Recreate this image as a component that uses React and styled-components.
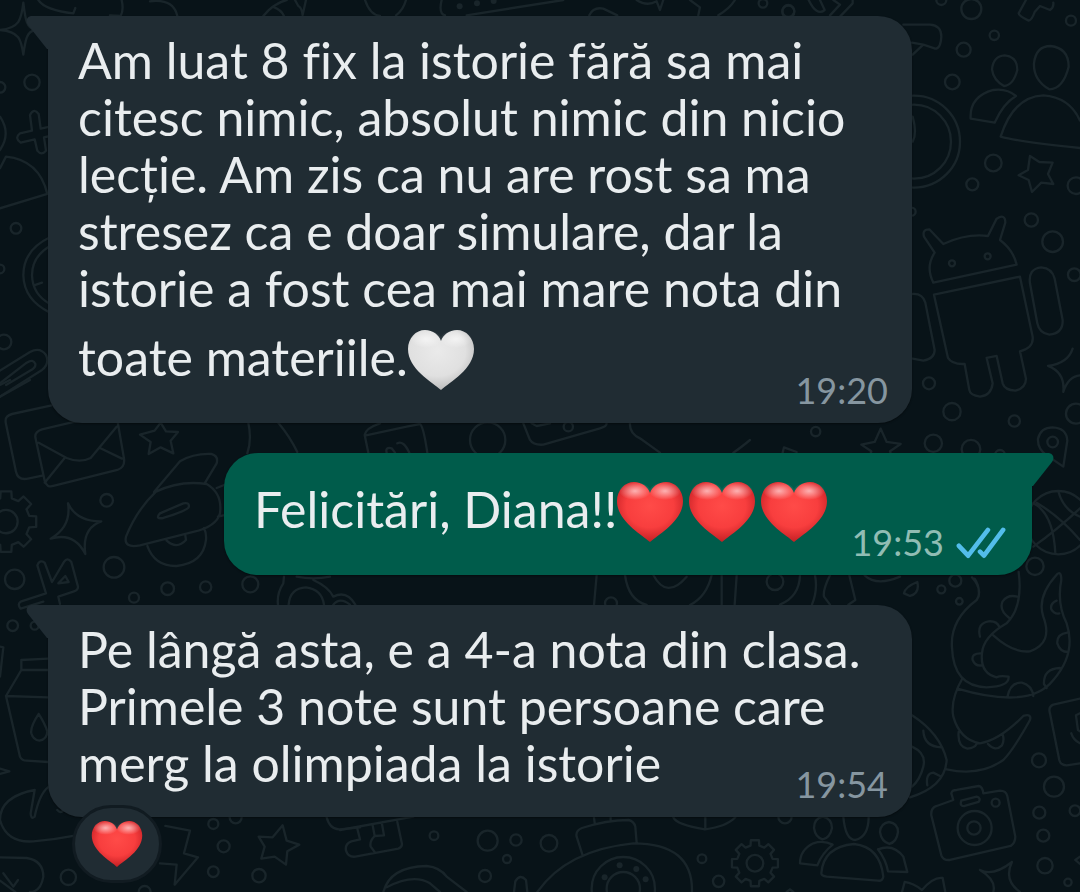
import React from 'react'
import styled, { createGlobalStyle, css } from 'styled-components'

const GlobalStyle = createGlobalStyle`
  body {
    margin: 0;
    background: #081318;
    font-family: Lato, 'Noto Sans', sans-serif;
    font-variant-ligatures: none;
  }
`

const Page = styled.main`
  position: relative;
  box-sizing: border-box;
  min-height: 100vh;
  padding: 16px 48px 0;
  overflow: hidden;
`

const WallpaperSvg = styled.svg`
  position: absolute;
  inset: 0;
  width: 100%;
  height: 100%;
  fill: none;
  stroke: #19252a;
  stroke-width: 7;
  stroke-linecap: round;
  stroke-linejoin: round;
`

const Dot = styled.circle`
  fill: #19252a;
  stroke: none;
`

const MessageList = styled.div`
  position: relative;
  display: flex;
  flex-direction: column;
  gap: 30px;
`

const Bubble = styled.article`
  position: relative;
  display: grid;
  padding: 16px 24px 25px 30px;
  color: #e9edef;
  box-shadow: 0 1px 2px rgba(0, 0, 0, 0.4);

  ${({ $sent }) => $sent ? css`
    margin-left: 176px;
    padding-right: 26px;
    border-radius: 34px 0 34px 34px;
    background: #005c4b;
    --tail: #005c4b;
  ` : css`
    margin-right: 120px;
    border-radius: 0 34px 34px 34px;
    background: #202c33;
    --tail: #202c33;
  `}
`

const TailSvg = styled.svg`
  position: absolute;
  top: 0;
  width: 22px;
  height: 33px;
  fill: var(--tail);

  ${({ $sent }) => $sent ? css`
    left: 100%;
    transform: scaleX(-1);
  ` : css`
    right: 100%;
  `}
`

const Text = styled.p`
  grid-area: 1 / 1;
  margin: 0;
  font-size: 50px;
  line-height: 57px;
  white-space: pre-line;
`

const Meta = styled.footer`
  grid-area: 1 / 1;
  place-self: end;
  display: flex;
  align-items: center;
  gap: 12px;
  margin-bottom: -12px;
  font-size: 36px;
  line-height: 40px;
  color: ${({ $sent }) => ($sent ? '#91bdb4' : '#8696a0')};
`

const ChecksSvg = styled.svg`
  width: 50px;
  height: 33px;
  fill: none;
  stroke: #53bdeb;
  stroke-width: 14;
  stroke-linecap: round;
  stroke-linejoin: round;
`

const InlineHeart = styled.svg`
  width: 72px;
  height: 81px;
  vertical-align: -22px;
`

const Reaction = styled.button`
  position: absolute;
  top: 100%;
  left: 24px;
  display: flex;
  align-items: center;
  justify-content: center;
  width: 90px;
  height: 78px;
  margin-top: -12px;
  padding: 0;
  border: 3px solid #111b21;
  border-radius: 40px;
  background: #202c33;
`

const ReactionHeart = styled.svg`
  width: 52px;
  height: 48px;
`

const HEART = 'M34 61C25 53 1 40 1 20C1 9 9 1 18 1C26 1 32 6 34 12C36 6 42 1 50 1C59 1 67 9 67 20C67 40 43 53 34 61Z'

// Doodles are grouped by the part of the wall they sit in, three units to a pixel.
const DOODLES = [
  {
    x: 0, y: 0,
    circles: [[96, 247, 23], [0, 262, 16], [48, 685, 16], [0, 807, 13], [12, 1026, 22]],
    path: `M70 8C76 60 80 84 106 90C80 94 76 120 70 164C64 120 58 94 0 90C58 84 64 60 70 8
      M150 380L122 386L116 342Q102 322 90 345L96 392L60 400Q42 414 62 428L104 418L112 452Q124 468 138 452L132 412L150 408
      M0 350Q34 400 0 450 M0 505L18 470Q118 480 142 582L0 625
      M150 712Q70 750 70 826Q72 900 150 938 M150 738Q96 770 96 826Q98 884 150 912 M102 856L126 848
      M0 1112L90 1056Q120 1040 138 1065Q150 1090 126 1110L0 1190 M0 1150L80 1088Q100 1076 106 1092Q108 1104 90 1112L18 1155
      M115 0Q135 30 220 40L226 24 M365 0Q372 30 362 48L330 46 M450 4Q520 -5 532 48
      M790 48Q820 10 860 0 M818 20Q845 30 852 48 M885 0L895 18Q905 22 908 45 M918 0L908 45`,
  },
  {
    x: 330, y: 0,
    circles: [[1299, 10, 13], [1375, 33, 18]],
    dots: [[389, 19], [441, 10], [491, 3]],
    path: `M105 0Q120 45 150 48 M228 0Q220 30 198 46 M335 0Q325 40 345 46 M410 46L700 0
      M778 46Q790 20 820 26L862 46 M920 0Q950 20 980 4L990 30L1000 0
      M1080 0L1110 22L1105 46 M1215 0Q1200 25 1165 46`,
  },
  {
    x: 780, y: 0,
    circles: [
      [25, 35, 18], [574, 27, 30], [484, 0, 15], [873, 62, 15], [643, 106, 14], [551, 149, 21], [517, 246, 22],
      [640, 489, 25], [577, 553, 18], [888, 557, 25], [395, 635, 12], [754, 660, 20], [818, 725, 31], [883, 824, 19],
      [447, 1150, 18], [516, 1235, 26], [703, 1263, 17], [888, 1241, 30], [107, 1295, 14], [460, 1330, 26],
      [573, 1348, 28], [402, 425, 138], [402, 425, 111], [516, 790, 9], [623, 769, 9],
    ],
    path: `M738 0L716 40Q716 48 746 62Q756 60 764 36L780 18L810 30Q822 22 820 8
      M370 74L450 74Q484 76 484 110Q482 146 466 146L430 134L396 128 M430 134L398 164 M398 350Q412 400 398 425
      M674 166Q712 170 712 210Q700 256 672 258Q640 240 636 208Q640 168 674 166Z
      M812 138Q866 144 866 200Q850 266 808 268Q760 240 762 190Q768 138 812 138Z
      M572 356Q568 290 640 270Q680 264 708 288Q670 310 644 368Z M900 362Q870 292 790 286Q700 290 662 410Q720 426 900 444
      M750 468L778 486L818 488L804 522L820 552L784 548L756 576L746 540L716 526L744 510Z
      M460 848Q436 800 464 758L432 710Q426 688 448 688L490 732Q560 700 624 708L650 656Q676 640 676 668L660 720Q700 750 710 794Z
      M462 884L720 830L758 1010Q762 1044 720 1054L738 1136Q738 1164 706 1172Q674 1170 668 1150L650 1068L620 1074L638 1150Q634 1186 600 1190Q570 1186 568 1170L554 1092Q516 1094 504 1074Z
      M398 882Q428 880 436 908L464 1050Q464 1076 430 1082L398 1076
      M750 850Q744 806 784 802Q816 804 824 836L848 960Q850 1000 808 1004Q778 1000 772 970Z
      M878 1046Q864 1090 804 1098Q856 1118 850 1176Q864 1130 900 1126
      M302 1286L320 1326L362 1332L330 1354L338 1380 M302 1286L284 1326L244 1334L274 1354L266 1380
      M86 0Q110 50 134 30L120 0 M180 50L218 10V0 M150 46L180 14L160 0`,
  },
  {
    x: 0, y: 380,
    circles: [
      [320, 361, 19], [44, 598, 29], [342, 562, 31], [503, 626, 19], [617, 621, 17], [402, 653, 15],
      [751, 613, 24], [38, 737, 16], [104, 737, 12],
    ],
    path: `M0 50L90 0 M0 15L30 0
      M155 76L36 102Q12 108 18 132L48 275Q54 302 84 296L130 286
      M106 172Q104 155 126 148L330 100Q348 96 352 120L372 235Q376 262 352 270L160 318Q140 324 134 302Z
      M116 188L200 234Q240 250 272 234L350 140 M134 308L194 234 M300 204L366 236
      M482 128L498 154L534 156L512 182L520 220L482 202L446 222L452 186L420 164L464 152Z
      M378 470Q410 390 468 335Q540 300 620 312Q668 340 660 400Q650 440 580 456L420 496Q370 506 378 470Z
      M462 336L540 244Q580 220 634 222Q656 228 650 250L614 310
      M480 400L550 370Q570 366 566 382Q560 392 490 414Q464 418 480 400
      M442 498Q464 560 530 558Q610 550 618 480Q620 460 612 444 M500 482Q530 510 558 480L556 466 M650 324L680 312 M654 410L680 404
      M204 370Q230 425 304 424Q245 445 256 522Q222 455 152 476Q215 440 204 370
      M180 672L175 650L222 634Q234 630 234 620L214 546Q202 530 192 546L156 606L134 548Q118 538 112 556L138 640L64 664Q50 672 62 686L130 665
      M175 610L196 588L206 606Z M745 128Q756 180 742 220 M835 128Q870 170 892 216
      M852 590L850 610Q830 640 834 674 M866 674Q870 624 918 622Q966 628 972 674 M890 590Q940 600 990 590
      M940 600Q985 620 1000 650Q1040 630 1066 674 M1000 674Q1020 650 1050 674`,
  },
  {
    x: 340, y: 300,
    circles: [[443, 420, 53], [685, 380, 14]],
    path: `M85 458L74 405Q76 385 120 370 M78 406L200 380L240 372Q250 378 262 458
      M140 458Q135 440 155 445L165 458 M172 430Q190 420 208 458
      M550 370L570 420Q580 436 610 434L780 385Q800 380 800 370 M575 370L590 378L630 370 M870 370Q868 400 900 415L960 458`,
  },
  {
    x: 590, y: 440,
    circles: [[63, 490, 18]],
    path: `M480 0Q450 25 430 38 M578 38L582 22L620 36
      M20 405L12 495 M105 405Q115 480 170 495 M365 405Q350 470 300 495 M190 405Q230 480 290 410`,
  },
  {
    x: 900, y: 370,
    circles: [[458, 216, 16], [475, 458, 95], [405, 589, 26], [300, 255, 15]],
    path: `M490 290L440 256Q412 236 414 206Q422 172 458 172Q500 174 502 212Z
      M400 400Q460 430 466 550 M475 364Q490 420 540 440 M400 530Q470 480 540 415 M410 398Q480 440 540 510`,
  },
  {
    x: 0, y: 590,
    circles: [[205, 862, 23], [640, 702, 15], [671, 769, 18], [640, 845, 16], [777, 857, 20], [434, 906, 18], [707, 682, 18]],
    path: `M144 206L64 210L64 240L144 240 M64 240L18 318L144 322 M18 318L60 500Q66 512 80 512L144 516
      M116 372Q90 412 94 430Q100 450 118 452Q142 448 142 424Q134 400 116 372 M0 170L10 172L0 260 M0 536L28 544L0 552
      M144 592Q118 612 104 680Q92 690 92 670L104 600Q0 620 0 690Q20 760 100 754Q160 750 220 738 M172 660q10 12 18 0
      M0 802L80 804Q130 812 130 860Q122 906 90 906 M10 850L40 890L54 870 M0 872L46 906
      M496 708L570 722L552 790L594 802L524 884L530 824L480 820
      M848 706L860 752L898 764L862 784L858 824L824 800L784 806L794 770L776 740L818 742Z
      M980 682Q990 720 1020 718L1080 712`,
  },
  {
    x: 340, y: 780,
    circles: [
      [282, 167, 13], [443, 182, 30], [528, 180, 17], [627, 190, 25], [501, 237, 12], [435, 288, 18],
      [1086, 236, 13], [1136, 304, 17], [850, 326, 95], [850, 326, 50],
    ],
    dots: [[839, 256], [889, 267], [794, 292], [917, 298]],
    path: `M0 150L220 110 M52 146L60 178L34 184Q14 192 18 212Q24 232 46 230L175 206Q186 202 186 192L172 126
      M98 136L104 168L132 166L126 132 M104 168Q88 184 92 200L104 216
      M130 336Q150 260 260 258Q300 262 320 290L380 336 M140 322Q220 280 270 310L300 336
      M522 336L526 304Q540 280 558 300L562 336 M592 336Q680 210 880 190Q1060 190 1056 336
      M728 226L710 170Q706 152 726 144Q800 120 866 120Q882 124 886 140L890 188 M764 128L762 112 M812 122V112
      M1000 112Q1010 135 1095 148Q1160 140 1186 112 M1096 112V148`,
  },
  {
    x: 720, y: 560,
    circles: [
      [165, 65, 25], [664, 88, 12], [706, 62, 18], [718, 124, 10], [957, 601, 21], [1002, 680, 30],
      [958, 758, 18], [1065, 752, 16], [970, 827, 18], [975, 917, 23], [1044, 967, 11], [195, 770, 20],
      [764, 804, 51], [762, 804, 20], [827, 728, 12],
    ],
    path: `M552 100Q556 80 592 66Q600 100 570 108Z
      M5 46V134 M50 46L44 134 M240 46Q238 110 180 134 M285 46Q294 90 276 134 M330 46Q308 90 312 110L330 134 M388 46L406 120L385 134 M434 46Q470 80 540 50
      M756 52Q790 90 770 120Q690 180 696 262Q700 380 800 382Q868 380 866 350Q840 346 830 352Q780 340 786 280Q790 230 860 190Q910 140 896 36
      M764 56Q780 80 776 110 M820 226Q880 280 930 274Q1000 250 970 170Q950 110 1010 44Q1024 30 1024 60Q1010 130 1040 190Q1070 280 1000 360Q930 450 712 386
      M728 354Q690 420 700 470Q720 540 780 550Q840 540 910 468Q936 460 930 480Q880 570 850 600Q780 650 680 628
      M576 466Q660 520 680 600Q676 680 570 712 M576 560Q620 580 610 620Q600 660 576 680
      M868 174Q836 150 848 124Q864 102 892 110 M780 230Q770 190 806 184Q830 182 838 200 M782 280Q754 280 758 300Q766 320 786 316
      M1010 122Q990 130 994 148Q1004 164 1018 160 M1042 218Q1010 222 1012 250Q1020 276 1044 276 M1020 324Q970 326 972 372L980 384
      M862 412Q870 366 906 368Q936 376 940 408 M716 516Q712 560 742 566Q764 564 770 552 M804 552Q826 576 846 556Q854 540 848 524
      M610 512Q612 560 664 562 M622 676Q616 640 640 638L660 648
      M1080 416L1000 434Q984 440 990 460L1018 600Q1022 616 1040 616L1080 610 M1080 460L1068 466L1074 510L1080 514 M1054 520Q1060 540 1080 550
      M700 720L694 700Q696 690 710 690L776 678Q788 680 790 700L840 692Q858 692 862 708L886 830Q886 848 872 858L690 900Q670 902 664 886L634 766Q632 744 650 738Z
      M724 722L770 710Q784 714 776 726L734 738Q718 740 724 722
      M308 770Q336 776 336 804Q330 834 308 838Q286 832 282 804Q282 776 308 770Z M370 770Q376 840 406 840Q446 830 446 770
      M507 786Q534 790 534 816Q530 846 508 852Q484 844 480 816Q482 790 507 786Z
      M304 940Q310 860 402 852Q480 860 490 950Q488 964 474 962L320 950Q304 948 304 940Z
      M338 854Q310 840 280 850Q240 870 240 910L292 916Q306 880 338 854Z M474 868Q520 850 550 890L562 936L504 934Q498 900 474 868
      M876 906Q850 960 900 996 M780 930Q820 950 876 906 M780 930Q830 960 820 996
      M546 996L554 966Q580 970 606 990Q640 950 668 954L676 996 M1080 890L1066 900L1080 912 M200 996l10 -8l10 8`,
  },
]

const gearPath = (cx, cy, r) => {
  const points = []
  for (let i = 0; i < 8; i++) {
    [[-14, 0.78], [-10, 1], [10, 1], [14, 0.78]].forEach(([offset, k]) => {
      const angle = ((i * 45 + offset) * Math.PI) / 180
      points.push(`${cx + Math.cos(angle) * r * k} ${cy + Math.sin(angle) * r * k}`)
    })
  }
  return `M${points.join('L')}Z`
}

const GEARS = [
  { cx: 18, cy: 1565, r: 92, hole: 35 },
  { cx: 2265, cy: 2590, r: 70, hole: 25 },
]

const Wallpaper = () => (
  <WallpaperSvg viewBox="0 0 1080 892" preserveAspectRatio="xMidYMin slice" aria-hidden="true">
    {DOODLES.map(({ x, y, path, circles, dots = [] }) => (
      <g key={`${x}-${y}`} transform={`translate(${x} ${y}) scale(0.3333)`}>
        <path d={path} />
        {circles.map(([cx, cy, r]) => <circle key={`${cx}-${cy}-${r}`} cx={cx} cy={cy} r={r} />)}
        {dots.map(([cx, cy]) => <Dot key={`${cx}-${cy}`} cx={cx} cy={cy} r="9" />)}
      </g>
    ))}
    <g transform="scale(0.3333)">
      {GEARS.map(({ cx, cy, r, hole }) => (
        <React.Fragment key={cx}>
          <path d={gearPath(cx, cy, r)} />
          <circle cx={cx} cy={cy} r={hole} />
        </React.Fragment>
      ))}
    </g>
  </WallpaperSvg>
)

const GradientDefs = styled.svg`
  position: absolute;
  width: 0;
  height: 0;
`

const HeartGradients = () => (
  <GradientDefs aria-hidden="true">
    <defs>
      <radialGradient id="heart-red" cx="0.5" cy="0.4" r="0.6">
        <stop offset="0" stopColor="#ff4b48" />
        <stop offset="0.6" stopColor="#f83e3e" />
        <stop offset="1" stopColor="#c41f24" />
      </radialGradient>
      <radialGradient id="heart-white" cx="0.45" cy="0.35" r="0.7">
        <stop offset="0" stopColor="#eaeaea" />
        <stop offset="0.6" stopColor="#e0e0e0" />
        <stop offset="1" stopColor="#b4b4b4" />
      </radialGradient>
      <radialGradient id="heart-shine">
        <stop offset="0" stopColor="#fff" stopOpacity="0.6" />
        <stop offset="1" stopColor="#fff" stopOpacity="0" />
      </radialGradient>
    </defs>
  </GradientDefs>
)

const HeartShape = ({ color }) => (
  <>
    <path d={HEART} fill={`url(#heart-${color})`} />
    <ellipse cx="19" cy="10" rx="16" ry="9" fill="url(#heart-shine)" />
    <ellipse cx="49" cy="10" rx="16" ry="9" fill="url(#heart-shine)" />
  </>
)

const Heart = ({ color }) => (
  <InlineHeart viewBox="1 -12 72 81" role="img" aria-label={`${color} heart`}>
    <HeartShape color={color} />
  </InlineHeart>
)

const Message = ({ sent, time, reaction, children }) => (
  <Bubble $sent={sent}>
    <TailSvg $sent={sent} viewBox="0 0 22 33" aria-hidden="true">
      <path d="M22 0H6C1 0 -1 5 2 9L21 33H22Z" />
    </TailSvg>
    <Text>{children}</Text>
    <Meta $sent={sent}>
      <time>{time}</time>
      {sent && (
        <ChecksSvg viewBox="1098 252 150 100" role="img" aria-label="Read">
          <path d="M1106 312L1134 342L1194 264 M1170 330L1182 342L1240 264" />
        </ChecksSvg>
      )}
    </Meta>
    {reaction && (
      <Reaction type="button" aria-label="Heart reaction">
        <ReactionHeart viewBox="0 0 68 62">
          <HeartShape color={reaction} />
        </ReactionHeart>
      </Reaction>
    )}
  </Bubble>
)

const App = () => {
  return (
    <>
      <GlobalStyle />
      <HeartGradients />
      <Page lang="ro">
        <Wallpaper />
        <MessageList>
          <Message time="19:20">
            {`Am luat 8 fix la istorie fără sa mai
            citesc nimic, absolut nimic din nicio
            lecție. Am zis ca nu are rost sa ma
            stresez ca e doar simulare, dar la
            istorie a fost cea mai mare nota din
            toate materiile.`}
            <Heart color="white" />
          </Message>
          <Message sent time="19:53">
            Felicitări, Diana!!
            <Heart color="red" />
            <Heart color="red" />
            <Heart color="red" />
          </Message>
          <Message time="19:54" reaction="red">
            {`Pe lângă asta, e a 4-a nota din clasa.
            Primele 3 note sunt persoane care
            merg la olimpiada la istorie`}
          </Message>
        </MessageList>
      </Page>
    </>
  )
}

export default App
